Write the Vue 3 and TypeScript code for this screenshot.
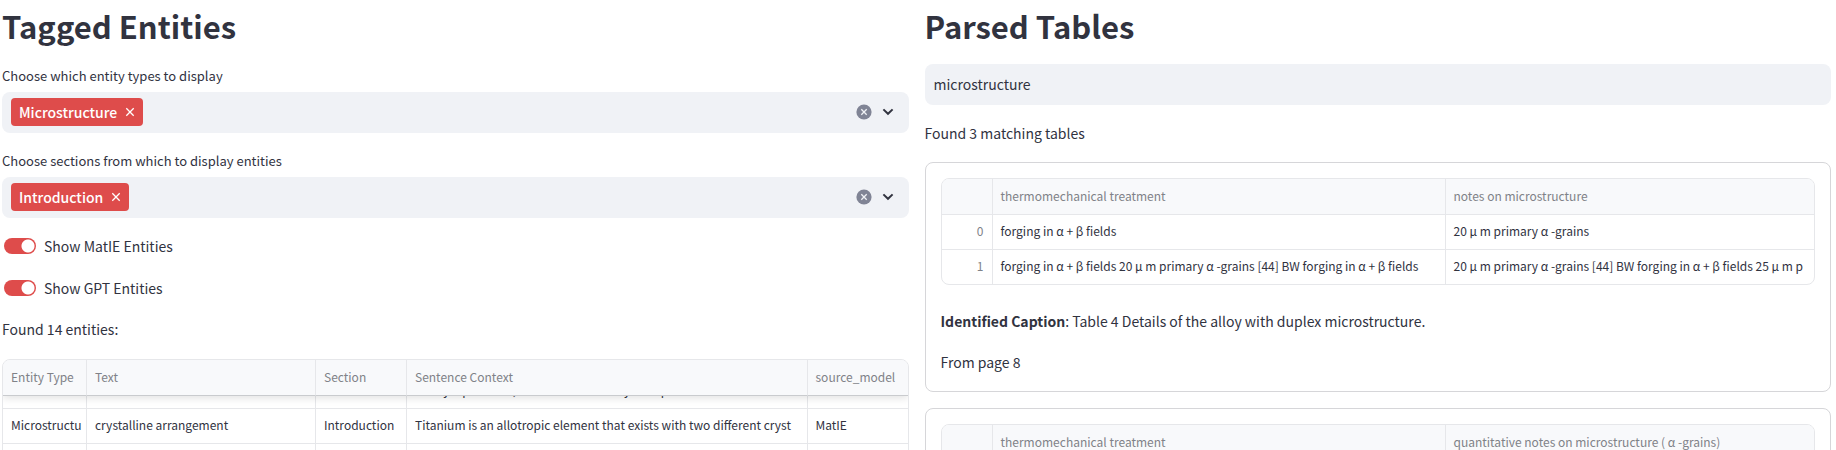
<script setup lang="ts">
import { onMounted, ref } from 'vue'

interface Choice { id: string; label: string; tag: string }
interface Toggle { id: string; label: string }
interface ParsedTable { columns: string[]; rows: string[][]; caption: string; page: number }

const choices = ref<Choice[]>([
  { id: 'types', label: 'Choose which entity types to display', tag: 'Microstructure' },
  { id: 'sections', label: 'Choose sections from which to display entities', tag: 'Introduction' },
])

const toggles: Toggle[] = [
  { id: 'matie', label: 'Show MatIE Entities' },
  { id: 'gpt', label: 'Show GPT Entities' },
]

const entityColumns = ['Entity Type', 'Text', 'Section', 'Sentence Context', 'source_model']
const entities: string[][] = [
  ['', '', '', 'Heavy alpha base, which then can vary for a part', ''],
  [
    'Microstructu',
    'crystalline arrangement',
    'Introduction',
    'Titanium is an allotropic element that exists with two different cryst',
    'MatIE',
  ],
  ['', '', '', '', ''],
  ['', '', '', '', ''],
]

const query = ref('microstructure')
const tables: ParsedTable[] = [
  {
    columns: ['thermomechanical treatment', 'notes on microstructure'],
    rows: [
      ['forging in α + β fields', '20 μ m primary α -grains'],
      [
        'forging in α + β fields 20 μ m primary α -grains [44] BW forging in α + β fields',
        '20 μ m primary α -grains [44] BW forging in α + β fields 25 μ m p',
      ],
    ],
    caption: 'Table 4 Details of the alloy with duplex microstructure.',
    page: 8,
  },
  {
    columns: ['thermomechanical treatment', 'quantitative notes on microstructure ( α -grains)'],
    rows: [],
    caption: '',
    page: 0,
  },
]

const scroller = ref<HTMLElement | null>(null)
onMounted(() => {
  if (scroller.value) scroller.value.scrollTop = 22
})
</script>

<template>
  <main class="page">
    <section class="column">
      <h2>Tagged Entities</h2>

      <div v-for="choice in choices" :key="choice.id" class="field">
        <label :for="choice.id">{{ choice.label }}</label>
        <div class="multiselect">
          <span v-if="choice.tag" class="tag">
            {{ choice.tag }}
            <button type="button" :aria-label="'Remove ' + choice.tag" @click="choice.tag = ''">
              <svg width="10" height="10" viewBox="0 0 10 10"><path d="M1.3 1.3l7.4 7.4M8.7 1.3l-7.4 7.4" /></svg>
            </button>
          </span>
          <input :id="choice.id" type="text" autocomplete="off" />
          <button type="button" class="clear" aria-label="Clear all" @click="choice.tag = ''">
            <svg width="16" height="16" viewBox="0 0 16 16">
              <circle cx="8" cy="8" r="7.6" />
              <path d="M5.3 5.3l5.4 5.4M10.7 5.3l-5.4 5.4" />
            </svg>
          </button>
          <button type="button" class="open" aria-label="Open options">
            <svg width="12" height="8" viewBox="0 0 12 8"><path d="M1.4 1.4l4.6 4.4 4.6-4.4" /></svg>
          </button>
        </div>
      </div>

      <label v-for="toggle in toggles" :key="toggle.id" class="toggle" :for="toggle.id">
        <input :id="toggle.id" type="checkbox" role="switch" checked />
        {{ toggle.label }}
      </label>

      <p class="found">Found 14 entities:</p>

      <div ref="scroller" class="frame scroll">
        <table class="entities">
          <colgroup>
            <col class="type" /><col class="text" /><col class="section" /><col /><col class="model" />
          </colgroup>
          <thead>
            <tr><th v-for="name in entityColumns" :key="name">{{ name }}</th></tr>
          </thead>
          <tbody>
            <tr v-for="(entity, r) in entities" :key="r">
              <td v-for="(cell, c) in entity" :key="c">{{ cell }}</td>
            </tr>
          </tbody>
        </table>
      </div>
    </section>

    <section class="column">
      <h2>Parsed Tables</h2>
      <input v-model="query" class="search" type="text" aria-label="Search tables" />
      <p class="matches">Found 3 matching tables</p>

      <article v-for="(table, t) in tables" :key="t" class="card">
        <div class="frame">
          <table>
            <colgroup><col class="index" /><col class="wide" /><col /></colgroup>
            <thead>
              <tr>
                <th></th>
                <th v-for="name in table.columns" :key="name">{{ name }}</th>
              </tr>
            </thead>
            <tbody>
              <tr v-for="(row, r) in table.rows" :key="r">
                <td class="number">{{ r }}</td>
                <td v-for="(cell, c) in row" :key="c">{{ cell }}</td>
              </tr>
            </tbody>
          </table>
        </div>
        <template v-if="table.caption">
          <p class="caption"><strong>Identified Caption</strong>: {{ table.caption }}</p>
          <p>From page {{ table.page }}</p>
        </template>
      </article>
    </section>
  </main>
</template>

<style>
body {
  margin: 0;
  background: #fff;
}
</style>

<style scoped>
.page {
  box-sizing: border-box;
  height: 100vh;
  overflow: hidden;
  display: grid;
  grid-template-columns: minmax(0, 1fr) minmax(0, 1fr);
  gap: 16px;
  padding: 0 5px 0 2px;
  color: #31333f;
  font-family: "Noto Sans CJK SC", "Noto Sans", sans-serif;
  font-size: 14px;
  line-height: 24px;
}

.column {
  display: flex;
  flex-direction: column;
}

h2 {
  margin: 0;
  padding: 5px 0 17px;
  font-size: 31px;
  font-weight: 700;
  line-height: 42px;
}

p {
  margin: 0;
}

button {
  display: flex;
  align-items: center;
  justify-content: center;
  padding: 0;
  border: 0;
  background: none;
  color: inherit;
  cursor: pointer;
}

svg {
  display: block;
  fill: none;
  stroke: currentColor;
}

input {
  font: inherit;
  color: inherit;
}

.field {
  display: flex;
  flex-direction: column;
  gap: 4px;
  margin-bottom: 16px;
}

.field label {
  font-size: 13px;
}

.multiselect {
  box-sizing: border-box;
  display: flex;
  align-items: center;
  height: 41px;
  padding: 0 15px 1px 9px;
  border-radius: 8px;
  background: #f0f2f6;
}

.multiselect input {
  flex: 1;
  min-width: 0;
  border: 0;
  outline: 0;
  background: none;
}

.tag {
  display: flex;
  align-items: center;
  gap: 8px;
  height: 28px;
  padding: 0 8px;
  border-radius: 4px;
  background: #de4c4b;
  color: #fff;
  font-weight: 500;
}

.tag svg {
  stroke-width: 1.3;
}

.clear {
  color: #808495;
}

.clear circle {
  fill: currentColor;
  stroke: none;
}

.clear path {
  stroke: #f0f2f6;
  stroke-width: 1.3;
}

.open {
  width: 12px;
  margin-left: 10px;
}

.open svg {
  stroke-width: 2;
}

.toggle {
  display: flex;
  align-items: center;
  gap: 8px;
  margin: 0 0 18px 2px;
}

.toggle input {
  appearance: none;
  box-sizing: border-box;
  width: 32px;
  height: 16px;
  margin: 0;
  border-radius: 8px;
  background: radial-gradient(circle at 24px 8px, #fff 6px, #de4c4b 7px);
}

.found {
  margin-bottom: 19px;
  line-height: 22px;
}

.frame {
  overflow: hidden;
  border: 1px solid #e6e7ea;
  border-radius: 8px;
}

.scroll {
  height: 140px;
}

table {
  width: 100%;
  border-collapse: separate;
  border-spacing: 0;
  table-layout: fixed;
  font-size: 12px;
}

th,
td {
  box-sizing: border-box;
  height: 35px;
  padding: 0 0 2px 8px;
  overflow: hidden;
  border-right: 1px solid #e6e7ea;
  border-bottom: 1px solid #e6e7ea;
  text-align: left;
  white-space: nowrap;
  font-weight: 400;
}

th:last-child,
td:last-child {
  border-right: 0;
}

.card tr:last-child td {
  border-bottom: 0;
  height: 34px;
}

th {
  height: 36px;
  background: #f8f9fb;
  color: #808288;
}

.entities thead {
  position: sticky;
  top: 0;
  box-shadow: 0 2px 8px rgba(0, 0, 0, 0.12);
}

.entities th {
  border-bottom-color: #c9cbce;
}

.type {
  width: 84px;
}

.text {
  width: 229px;
}

.section {
  width: 91px;
}

.model {
  width: 100px;
}

.index {
  width: 51px;
}

.wide {
  width: 453px;
}

td.number {
  padding: 0 8px 2px 0;
  color: #808288;
  text-align: right;
}

.search {
  box-sizing: border-box;
  width: 100%;
  height: 41px;
  padding: 0 9px 2px;
  border: 0;
  border-radius: 8px;
  background: #f0f2f6;
}

.matches {
  margin: 16px 0 17px;
}

.card {
  display: flex;
  flex-direction: column;
  gap: 17px;
  margin-bottom: 16px;
  padding: 15px 15px 17px;
  border: 1px solid #d6d6d9;
  border-radius: 8px;
}

.caption {
  margin-top: 7px;
}
</style>
